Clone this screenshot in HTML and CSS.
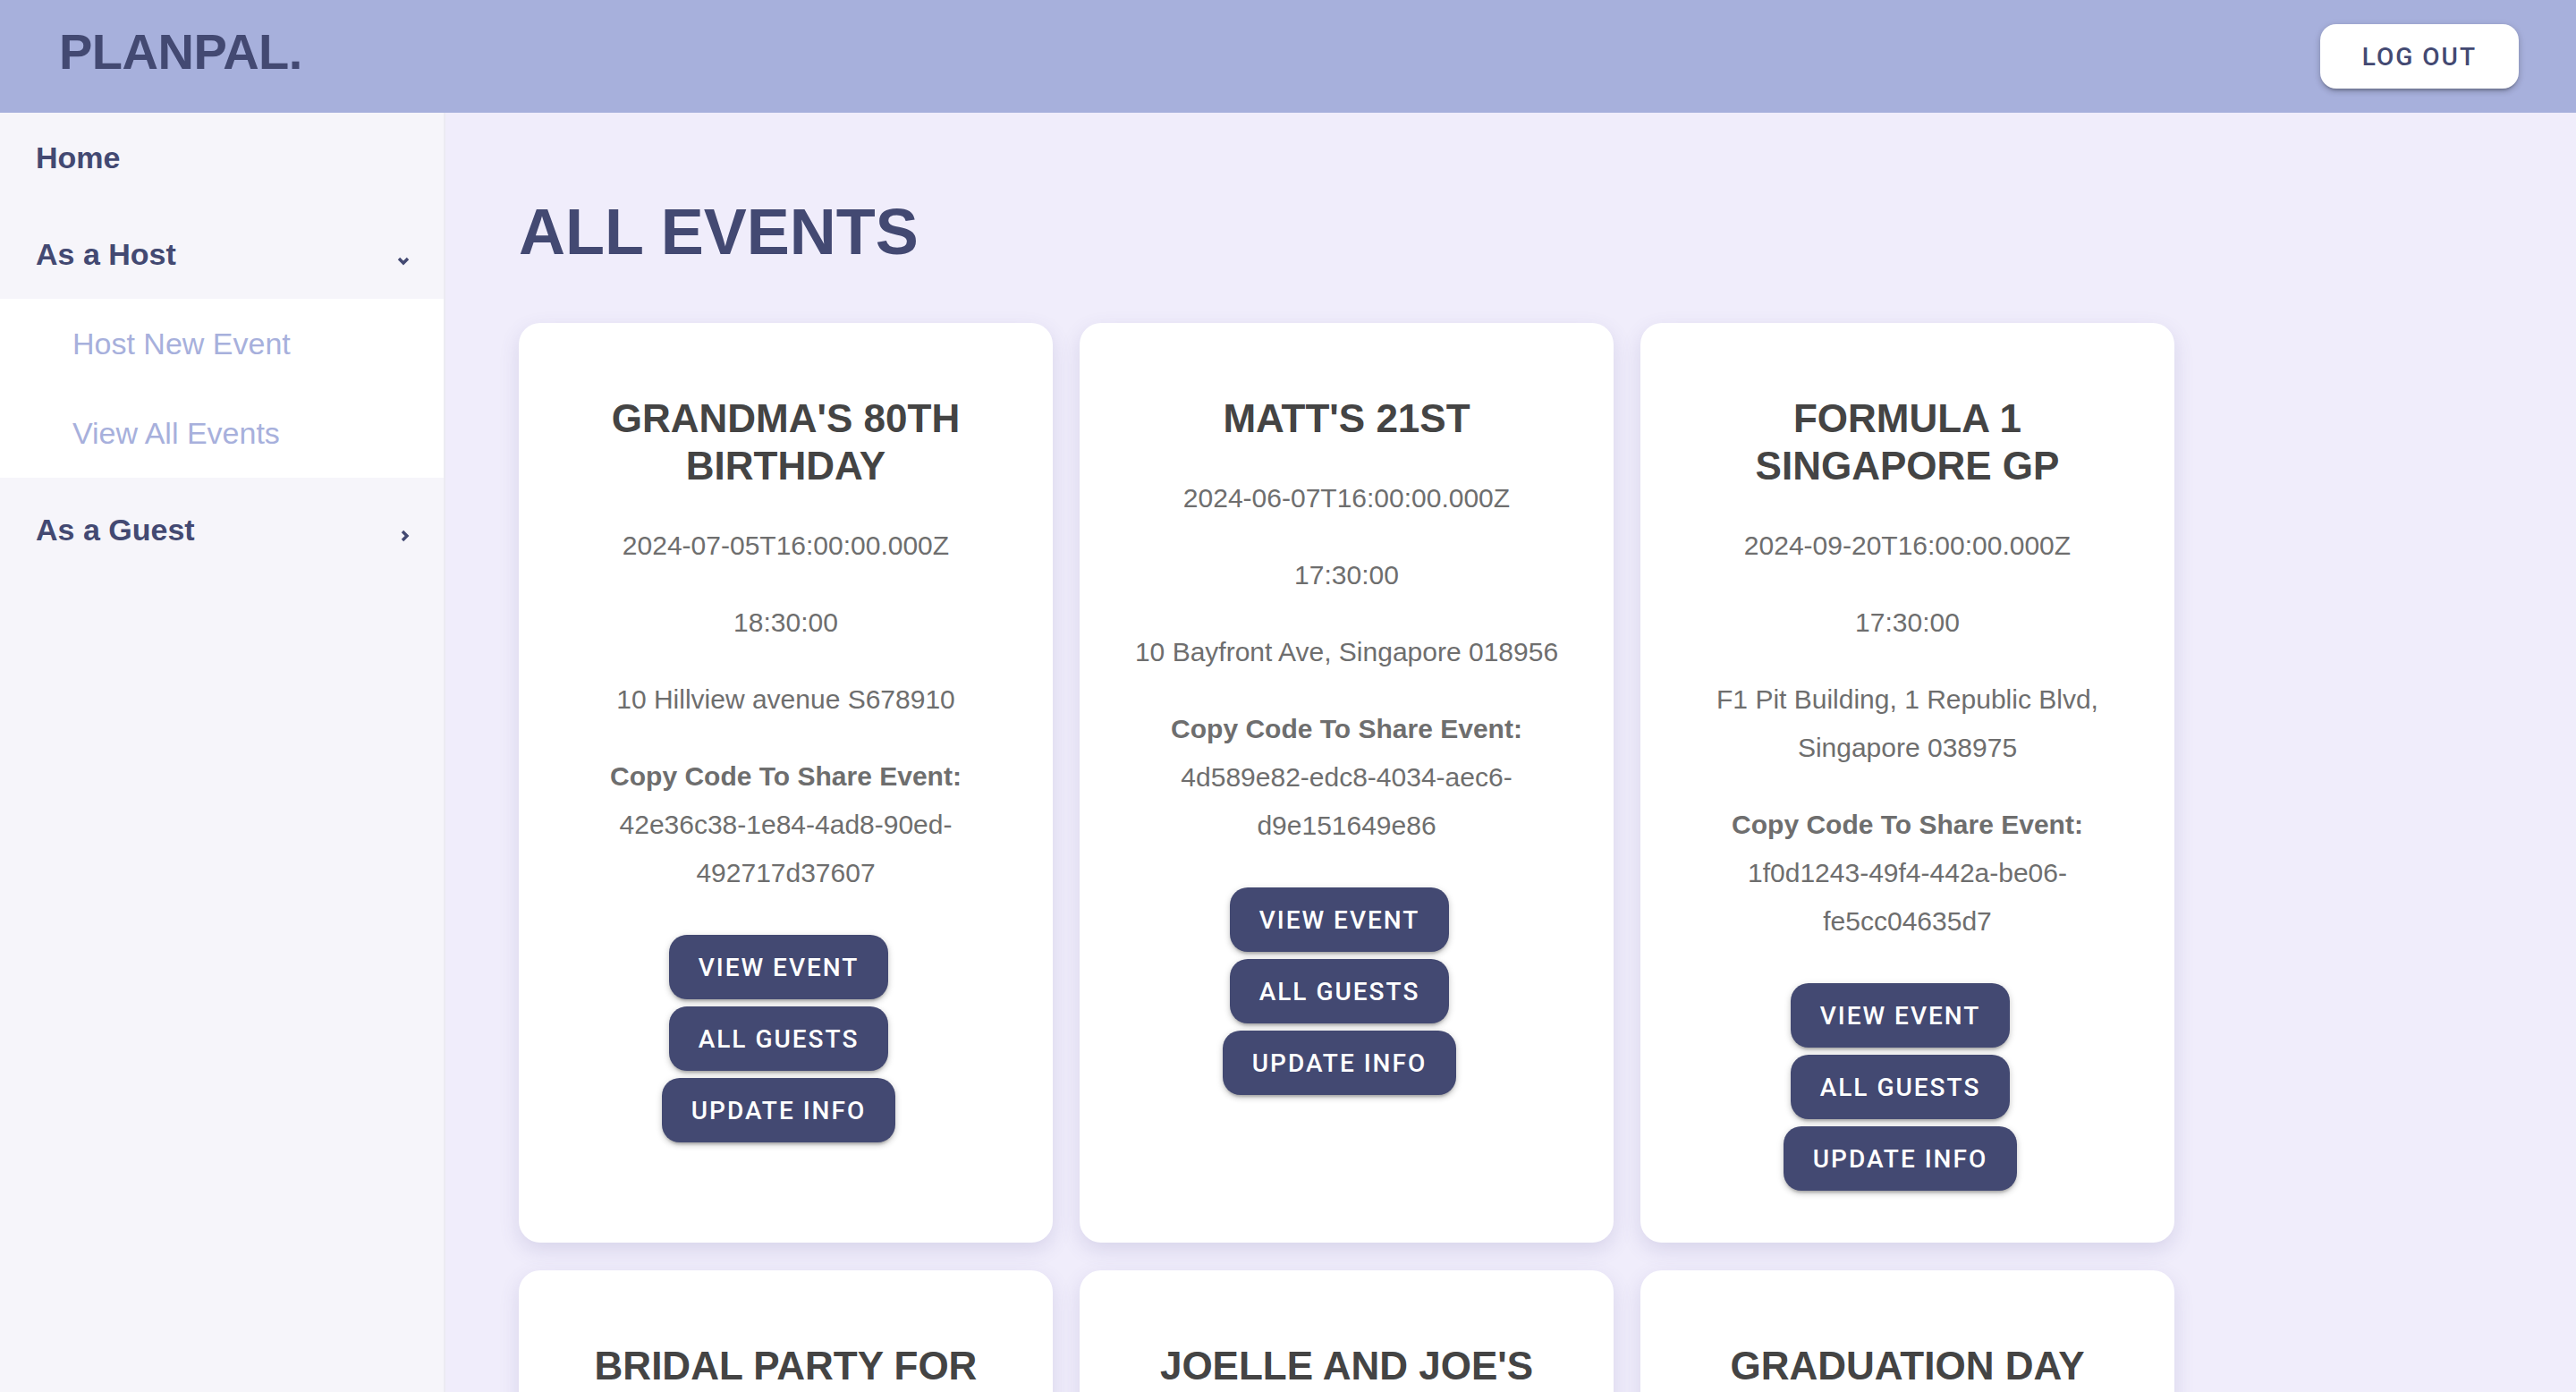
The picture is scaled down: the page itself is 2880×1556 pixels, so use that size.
FILE: index.html
```html
<!DOCTYPE html>
<html lang="en">
<head>
    <meta charset="UTF-8">
    <meta name="viewport" content="width=device-width, initial-scale=1.0">
    <title>PlanPal - All Events</title>
    <link rel="stylesheet" href="styles.css">
</head>
<body>

    <header class="topbar">
        <div class="logo">PLANPAL.</div>
        <button class="btn-logout">Log out</button>
    </header>

    <div class="layout">
        <!-- Sidebar -->
        <aside class="sidebar">
            <a href="#" class="menu-item">Home</a>

            <div class="submenu open">
                <a href="#" class="menu-item submenu-title">
                    <span>As a Host</span>
                    <svg class="chevron" width="14" height="10" viewBox="0 0 14 10"><polyline points="2,2 7,7 12,2" fill="none" stroke="currentColor" stroke-width="3.4"/></svg>
                </a>
                <div class="submenu-items">
                    <a href="#" class="sub-item">Host New Event</a>
                    <a href="#" class="sub-item">View All Events</a>
                </div>
            </div>

            <div class="submenu">
                <a href="#" class="menu-item submenu-title">
                    <span>As a Guest</span>
                    <svg class="chevron chevron-right" width="10" height="14" viewBox="0 0 10 14"><polyline points="2,2 7,7 2,12" fill="none" stroke="currentColor" stroke-width="3.4"/></svg>
                </a>
            </div>
        </aside>

        <!-- Main content -->
        <main class="content">
            <h1 class="page-title">ALL EVENTS</h1>

            <div class="events-grid">
                <div class="event-card">
                    <h2>GRANDMA'S 80TH BIRTHDAY</h2>
                    <p>2024-07-05T16:00:00.000Z</p>
                    <p>18:30:00</p>
                    <p>10 Hillview avenue S678910</p>
                    <p><strong>Copy Code To Share Event:</strong><br>42e36c38-1e84-4ad8-90ed-<wbr>492717d37607</p>
                    <div class="card-actions">
                        <button class="btn-card">View event</button>
                        <button class="btn-card">All guests</button>
                        <button class="btn-card">Update info</button>
                    </div>
                </div>

                <div class="event-card">
                    <h2>MATT'S 21ST</h2>
                    <p>2024-06-07T16:00:00.000Z</p>
                    <p>17:30:00</p>
                    <p>10 Bayfront Ave, Singapore 018956</p>
                    <p><strong>Copy Code To Share Event:</strong><br>4d589e82-edc8-4034-aec6-<wbr>d9e151649e86</p>
                    <div class="card-actions">
                        <button class="btn-card">View event</button>
                        <button class="btn-card">All guests</button>
                        <button class="btn-card">Update info</button>
                    </div>
                </div>

                <div class="event-card">
                    <h2>FORMULA 1 SINGAPORE GP</h2>
                    <p>2024-09-20T16:00:00.000Z</p>
                    <p>17:30:00</p>
                    <p>F1 Pit Building, 1 Republic Blvd, Singapore 038975</p>
                    <p><strong>Copy Code To Share Event:</strong><br>1f0d1243-49f4-442a-be06-<wbr>fe5cc04635d7</p>
                    <div class="card-actions">
                        <button class="btn-card">View event</button>
                        <button class="btn-card">All guests</button>
                        <button class="btn-card">Update info</button>
                    </div>
                </div>

                <div class="event-card">
                    <h2>BRIDAL PARTY FOR CHLOE</h2>
                    <p>2024-08-10T16:00:00.000Z</p>
                    <p>14:00:00</p>
                    <p>1 Fullerton Square, Singapore 049178</p>
                    <p><strong>Copy Code To Share Event:</strong><br>8b2f0c1a-3d4e-4f5a-9b6c-<wbr>7d8e9f0a1b2c</p>
                    <div class="card-actions">
                        <button class="btn-card">View event</button>
                        <button class="btn-card">All guests</button>
                        <button class="btn-card">Update info</button>
                    </div>
                </div>

                <div class="event-card">
                    <h2>JOELLE AND JOE'S WEDDING</h2>
                    <p>2024-11-16T16:00:00.000Z</p>
                    <p>19:00:00</p>
                    <p>28 Sentosa Gateway, Singapore 098138</p>
                    <p><strong>Copy Code To Share Event:</strong><br>c3a1e5d7-2b4f-4a6c-8e0d-<wbr>1f3b5d7e9a2c</p>
                    <div class="card-actions">
                        <button class="btn-card">View event</button>
                        <button class="btn-card">All guests</button>
                        <button class="btn-card">Update info</button>
                    </div>
                </div>

                <div class="event-card">
                    <h2>GRADUATION DAY</h2>
                    <p>2024-07-12T16:00:00.000Z</p>
                    <p>10:00:00</p>
                    <p>21 Lower Kent Ridge Rd, Singapore 119077</p>
                    <p><strong>Copy Code To Share Event:</strong><br>5e7a9c1b-6d8f-4b2e-a4c6-<wbr>0e2a4c6e8b1d</p>
                    <div class="card-actions">
                        <button class="btn-card">View event</button>
                        <button class="btn-card">All guests</button>
                        <button class="btn-card">Update info</button>
                    </div>
                </div>
            </div>
        </main>
    </div>

</body>
</html>
```

FILE: styles.css
```css
* {
    box-sizing: border-box;
}

body {
    margin: 0;
    font-family: "Liberation Sans", Arial, sans-serif;
    background-color: #f0edfb;
}

/* Top bar */
.topbar {
    height: 126px;
    background-color: #a7b0dc;
    display: flex;
    align-items: center;
    justify-content: space-between;
    padding: 0 64px 0 66px;
}

.logo {
    font-size: 56px;
    font-weight: bold;
    letter-spacing: -0.5px;
    color: #434972;
    margin-bottom: 12px;
}

.btn-logout {
    height: 72px;
    padding: 0 47px;
    background-color: #fff;
    color: #434972;
    border: none;
    border-radius: 18px;
    font-family: Roboto, sans-serif;
    font-weight: 500;
    font-size: 28px;
    letter-spacing: 2px;
    text-transform: uppercase;
    box-shadow: 0 4px 3px -2px rgba(0, 0, 0, 0.2), 0 3px 6px rgba(0, 0, 0, 0.14), 0 2px 10px rgba(0, 0, 0, 0.1);
    cursor: pointer;
}

/* Layout */
.layout {
    display: flex;
    min-height: calc(100vh - 126px);
}

.sidebar {
    width: 498px;
    flex-shrink: 0;
    background-color: #f6f5fa;
    border-right: 2px solid #ecebf2;
}

.menu-item {
    display: flex;
    align-items: center;
    justify-content: space-between;
    height: 100px;
    padding: 0 38px 0 40px;
    font-size: 34px;
    font-weight: bold;
    color: #434972;
    text-decoration: none;
}

.submenu-title {
    height: 108px;
    padding-top: 8px;
}

.submenu + .submenu .submenu-title {
    height: 108px;
    padding-top: 8px;
}

.chevron {
    color: #434972;
    margin-top: 16px;
}

.chevron-right {
    margin-top: 14px;
}

.submenu-items {
    background-color: #fff;
}

.sub-item {
    display: flex;
    align-items: center;
    height: 100px;
    padding-left: 81px;
    font-size: 34px;
    color: #a7b0dc;
    text-decoration: none;
}

/* Main */
.content {
    flex: 1;
    padding: 92px 82px 60px;
}

.page-title {
    margin: 0 0 61px;
    font-size: 72px;
    font-weight: bold;
    color: #434972;
    line-height: normal;
}

.events-grid {
    display: grid;
    grid-template-columns: repeat(3, 597px);
    gap: 31px 30px;
}

.event-card {
    background-color: #fff;
    border-radius: 24px;
    padding: 44px 40px 40px;
    text-align: center;
    box-shadow: 0 8px 22px rgba(90, 80, 150, 0.16);
}

.event-card h2 {
    margin: 36px 0;
    font-size: 44px;
    line-height: 53px;
    color: #444;
}

.event-card p {
    margin: 32px 0;
    font-size: 30px;
    line-height: 54px;
    color: #6e6e6e;
}

.card-actions {
    display: flex;
    flex-direction: column;
    align-items: center;
    gap: 8px;
    margin: 42px 0 18px;
}

.btn-card {
    height: 72px;
    padding: 0 33px;
    margin-right: 16px;
    background-color: #434972;
    color: #fff;
    border: none;
    border-radius: 20px;
    font-family: Roboto, sans-serif;
    font-weight: 500;
    font-size: 28px;
    letter-spacing: 2px;
    text-transform: uppercase;
    box-shadow: 0 4px 3px -2px rgba(0, 0, 0, 0.2), 0 3px 6px rgba(0, 0, 0, 0.14), 0 2px 10px rgba(0, 0, 0, 0.1);
    cursor: pointer;
}
```
